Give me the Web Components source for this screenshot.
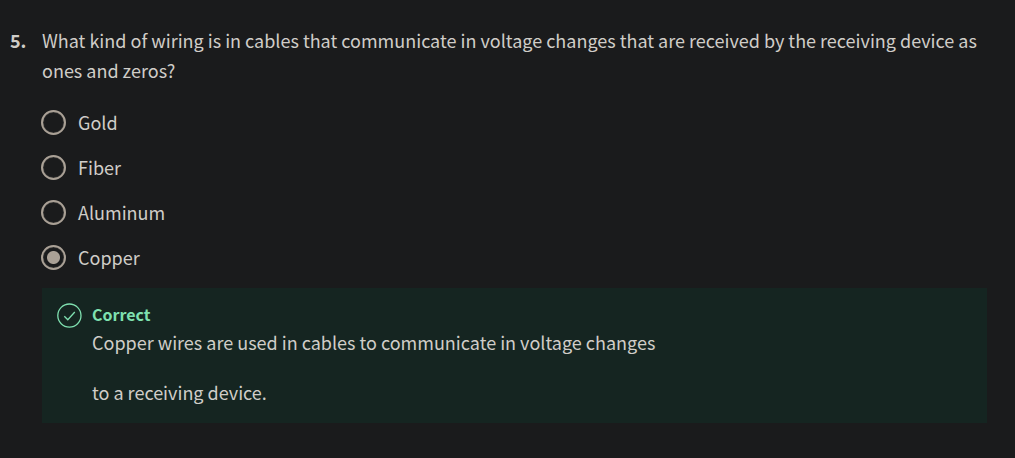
<!DOCTYPE html>
<html lang="en">
<head>
<meta charset="utf-8">
<meta name="viewport" content="width=device-width, initial-scale=1">
<title>Quiz question</title>
<style>
  body {
    margin: 0;
    background: #1a1b1c;
    color: #d0cdc8;
    font: 18px/30px "Noto Sans CJK SC", "Noto Sans", sans-serif;
  }
</style>
</head>
<body>
<quiz-question number="5.">
  <span slot="prompt">What kind of wiring is in cables that communicate in voltage changes that are received by the receiving device as ones and zeros?</span>
  <quiz-options answers="Gold|Fiber|Aluminum|Copper" selected="Copper"></quiz-options>
  <quiz-feedback slot="feedback" heading="Correct">
    <p>Copper wires are used in cables to communicate in voltage changes</p>
    <p>to a receiving device.</p>
  </quiz-feedback>
</quiz-question>

<script>
  class QuizQuestion extends HTMLElement {
    constructor() {
      super();
      this.attachShadow({ mode: "open" }).innerHTML = `
        <style>
          :host { display: block; padding: 25px 28px 35px 10px; }
          article { display: grid; grid-template-columns: 32px minmax(0, 1fr); }
          .number { font-weight: 700; }
          .prompt { margin: 0; }
          .answers { grid-column: 2; margin: 25px 0 18px; }
          .feedback { grid-column: 2; }
        </style>
        <article>
          <span class="number"></span>
          <p class="prompt"><slot name="prompt"></slot></p>
          <div class="answers"><slot></slot></div>
          <div class="feedback"><slot name="feedback"></slot></div>
        </article>`;
    }
    connectedCallback() {
      this.shadowRoot.querySelector(".number").textContent = this.getAttribute("number");
    }
  }

  class QuizOptions extends HTMLElement {
    constructor() {
      super();
      this.attachShadow({ mode: "open" }).innerHTML = `
        <style>
          :host { display: block; }
          fieldset { display: grid; gap: 20px; margin: 0 0 0 -1px; padding: 0; border: 0; }
          label { display: flex; align-items: center; gap: 12px; height: 25px; cursor: pointer; }
          span { padding-bottom: 2px; }
          input {
            appearance: none; box-sizing: border-box; flex: none;
            width: 25px; height: 25px; margin: 0;
            border: 2px solid #aaa196; border-radius: 50%;
            box-shadow: inset 0 0 1px #aaa196;
          }
          input:checked { background: radial-gradient(circle, #aaa196 6px, transparent 7px); }
        </style>
        <fieldset aria-label="Answers"></fieldset>`;
    }
    connectedCallback() {
      const selected = this.getAttribute("selected");
      const labels = this.getAttribute("answers").split("|").map((text) => {
        const label = document.createElement("label");
        const input = document.createElement("input");
        const caption = document.createElement("span");
        input.type = "radio";
        input.name = "answer";
        input.value = text;
        input.defaultChecked = text === selected;
        caption.textContent = text;
        label.append(input, caption);
        return label;
      });
      this.shadowRoot.querySelector("fieldset").replaceChildren(...labels);
    }
  }

  class QuizFeedback extends HTMLElement {
    constructor() {
      super();
      this.attachShadow({ mode: "open" }).innerHTML = `
        <style>
          :host { display: block; background: #152521; }
          section { display: flex; align-items: flex-start; gap: 10px; padding: 14px 15px 16px; }
          svg { flex: none; width: 25px; height: 27px; }
          h2 { margin: 0; color: #7fe0b0; font-size: 16px; line-height: 25px; font-weight: 700; }
          .body { display: grid; gap: 20px; }
          ::slotted(p) { margin: 0; }
        </style>
        <section>
          <svg viewBox="0 -1 25 27" fill="none" stroke="#7fe0b0" stroke-width="1.3" aria-hidden="true">
            <circle cx="12.4" cy="12.6" r="11.6"/>
            <path d="M7.3 13.2l3.5 3.5 7-7.7"/>
          </svg>
          <div>
            <h2></h2>
            <div class="body"><slot></slot></div>
          </div>
        </section>`;
    }
    connectedCallback() {
      this.shadowRoot.querySelector("h2").textContent = this.getAttribute("heading");
    }
  }

  customElements.define("quiz-question", QuizQuestion);
  customElements.define("quiz-options", QuizOptions);
  customElements.define("quiz-feedback", QuizFeedback);
</script>
</body>
</html>
